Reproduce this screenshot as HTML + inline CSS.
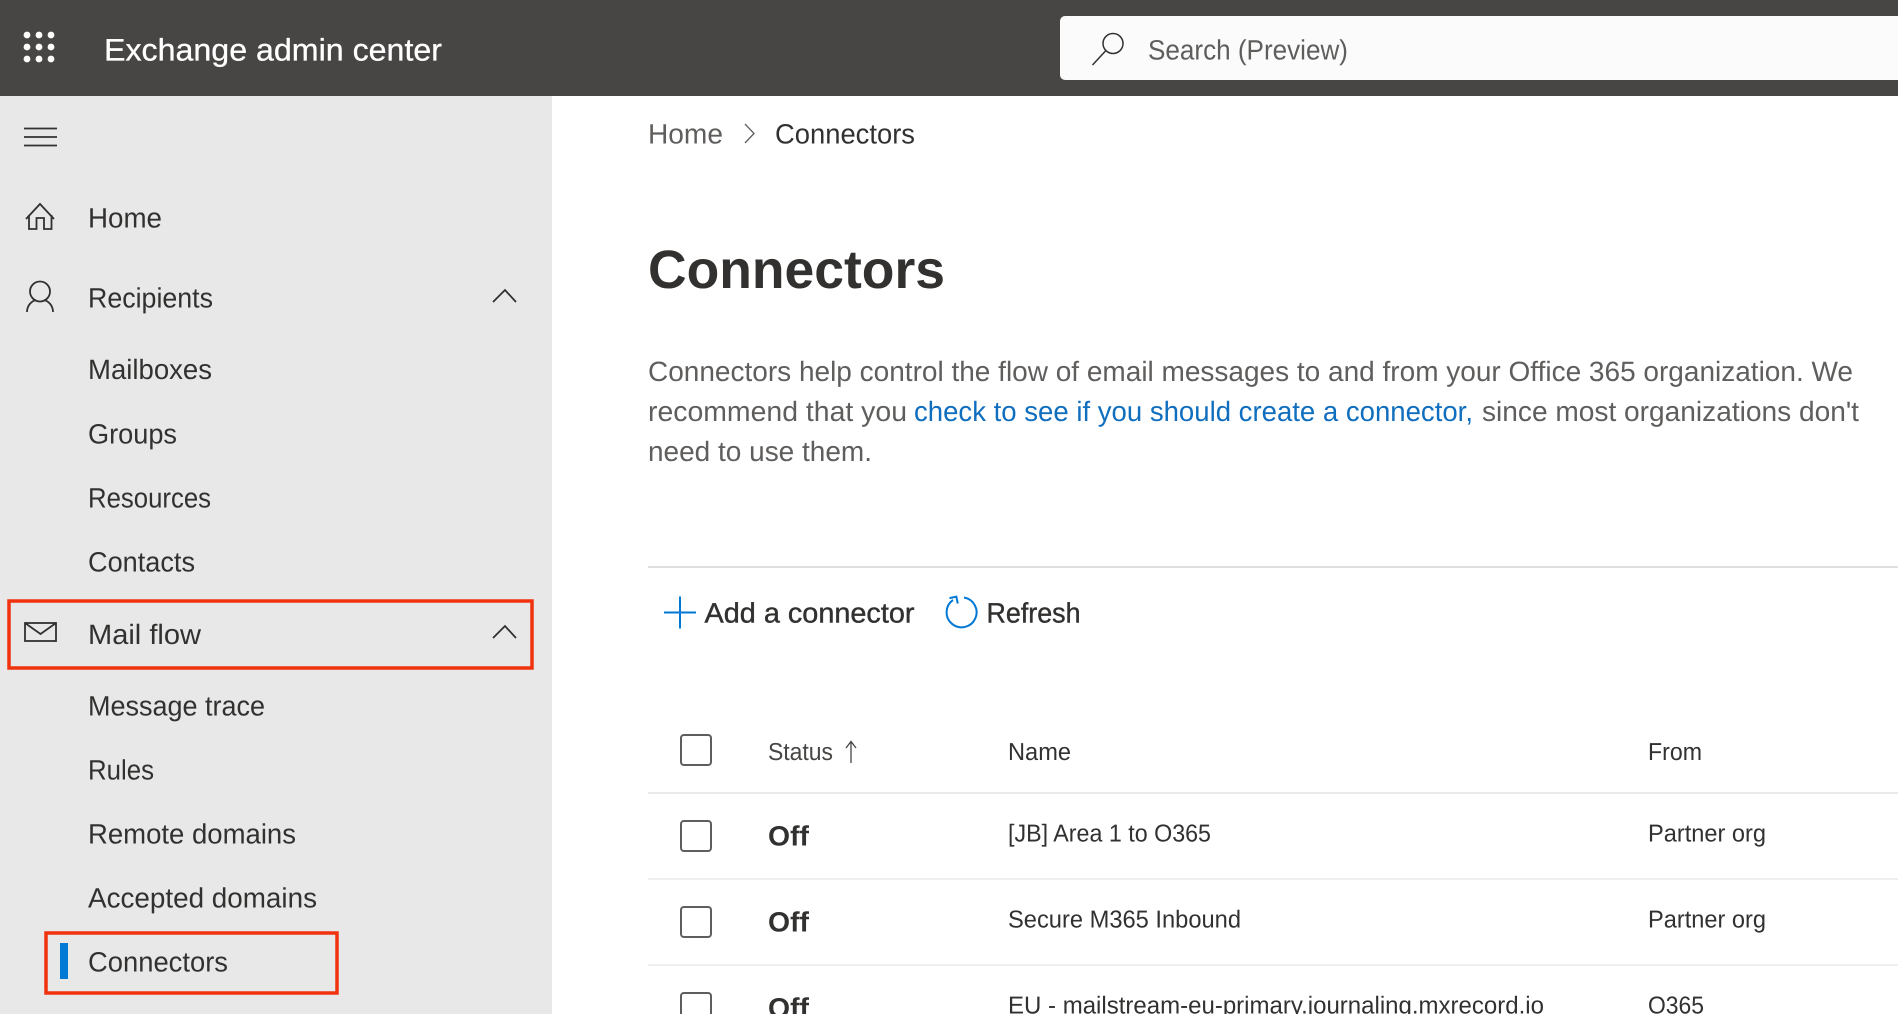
<!DOCTYPE html>
<html lang="en"><head><meta charset="utf-8"><title>Exchange admin center</title>
<style>
html,body{margin:0;padding:0;background:#fff;width:1898px;height:1014px;overflow:hidden}
svg{display:block;position:absolute;left:0;top:0}
text{font-family:"Liberation Sans",sans-serif;text-rendering:geometricPrecision;white-space:pre}
.n{font-size:28px;fill:#323130}
.p{font-size:28px;fill:#605e5c}
.t{font-size:24.500px;fill:#323130}
.s{font-size:28px;fill:#323130;stroke:#323130;stroke-width:.4px}
.o{font-size:28px;fill:#323130;font-weight:bold}
.i{fill:none;stroke:#323130;stroke-width:1.800}
</style></head><body>
<svg width="1898" height="1014" viewBox="0 0 1898 1014" xmlns="http://www.w3.org/2000/svg">
<rect width="1898" height="1014" fill="#fff"/>
<rect width="1898" height="96" fill="#484644"/>
<rect y="96" width="552" height="918" fill="#e8e8e8"/>
<g fill="#fff"><circle cx="27" cy="35" r="3.400"/><circle cx="39" cy="35" r="3.400"/><circle cx="51" cy="35" r="3.400"/><circle cx="27" cy="47" r="3.400"/><circle cx="39" cy="47" r="3.400"/><circle cx="51" cy="47" r="3.400"/><circle cx="27" cy="59" r="3.400"/><circle cx="39" cy="59" r="3.400"/><circle cx="51" cy="59" r="3.400"/></g>
<text x="104" y="60.500" font-size="31" fill="#fff" stroke="#fff" stroke-width=".3" textLength="338" lengthAdjust="spacingAndGlyphs">Exchange admin center</text>
<rect x="1060" y="16" width="860" height="64" rx="5" fill="#fbfbfb"/>
<circle cx="1113" cy="43.500" r="10" fill="none" stroke="#323130" stroke-width="1.500"/><path d="M1105.500 51 1092.500 65" fill="none" stroke="#323130" stroke-width="1.500"/>
<text x="1148" y="59.500" font-size="28" fill="#605e5c" textLength="200" lengthAdjust="spacingAndGlyphs">Search (Preview)</text>

<path d="M24 128.500H57M24 137H57M24 145.500H57" class="i"/>
<path d="M26 219 40 204 54 219M29 215V229H36.500V218H44V229H51.500V215" class="i"/>
<circle cx="40" cy="291.500" r="10" class="i"/><path d="M27 312C27 305 32 301 36 300M53 312C53 305 48 301 44 300" class="i"/>
<rect x="25" y="623" width="31" height="18" class="i"/><path d="M25 623 40.500 634 56 623" class="i"/>
<path d="M493 302 505 290 516 302M493 638 505 626 516 638" class="i"/>

<text class="n" x="88" y="227.500" textLength="74" lengthAdjust="spacingAndGlyphs">Home</text>
<text class="n" x="88" y="307.500" textLength="125" lengthAdjust="spacingAndGlyphs">Recipients</text>
<text class="n" x="88" y="379" textLength="124" lengthAdjust="spacingAndGlyphs">Mailboxes</text>
<text class="n" x="88" y="443.500" textLength="89" lengthAdjust="spacingAndGlyphs">Groups</text>
<text class="n" x="88" y="507.500" textLength="123" lengthAdjust="spacingAndGlyphs">Resources</text>
<text class="n" x="88" y="571.500" textLength="107" lengthAdjust="spacingAndGlyphs">Contacts</text>
<text class="n" x="88" y="644" textLength="113" lengthAdjust="spacingAndGlyphs">Mail flow</text>
<text class="n" x="88" y="715.500" textLength="177" lengthAdjust="spacingAndGlyphs">Message trace</text>
<text class="n" x="88" y="779.500" textLength="66" lengthAdjust="spacingAndGlyphs">Rules</text>
<text class="n" x="88" y="843.500" textLength="208" lengthAdjust="spacingAndGlyphs">Remote domains</text>
<text class="n" x="88" y="907.500" textLength="229" lengthAdjust="spacingAndGlyphs">Accepted domains</text>
<text class="n" x="88" y="971.500" textLength="140" lengthAdjust="spacingAndGlyphs">Connectors</text>
<rect x="9" y="601" width="523" height="67" fill="none" stroke="#f0320f" stroke-width="3.500"/>
<rect x="46" y="933" width="291" height="60" fill="none" stroke="#f0320f" stroke-width="3.500"/>
<rect x="60" y="943" width="8" height="36" fill="#0078d4"/>

<text x="648" y="143.500" font-size="28" fill="#605e5c" textLength="75" lengthAdjust="spacingAndGlyphs">Home</text>
<path d="M745 124 754 133.500 745 143" fill="none" stroke="#605e5c" stroke-width="1.300"/>
<text class="n" x="775" y="143.500" textLength="140" lengthAdjust="spacingAndGlyphs">Connectors</text>
<text x="648" y="288" font-size="54" font-weight="bold" fill="#323130" textLength="297" lengthAdjust="spacingAndGlyphs">Connectors</text>

<text class="p" x="648" y="381" textLength="1205" lengthAdjust="spacingAndGlyphs">Connectors help control the flow of email messages to and from your Office 365 organization. We</text>
<text class="p" x="648" y="421" textLength="259" lengthAdjust="spacingAndGlyphs">recommend that you</text>
<text x="914" y="421" font-size="28" fill="#106ebe" textLength="559" lengthAdjust="spacingAndGlyphs">check to see if you should create a connector,</text>
<text class="p" x="1482" y="421" textLength="377" lengthAdjust="spacingAndGlyphs">since most organizations don't</text>
<text class="p" x="648" y="461" textLength="224" lengthAdjust="spacingAndGlyphs">need to use them.</text>

<rect x="648" y="566" width="1250" height="2" fill="#e1dfdd"/>
<path d="M664 612.500H696M680 596.500V628.500" fill="none" stroke="#0078d4" stroke-width="2"/>
<text class="s" x="704.500" y="622.500" textLength="210" lengthAdjust="spacingAndGlyphs">Add a connector</text>
<path d="M953 600A15 15 0 1 0 964 597.500" fill="none" stroke="#0078d4" stroke-width="2"/>
<path d="M950 597H957V604" fill="none" stroke="#0078d4" stroke-width="2" transform="rotate(-12 955 600)"/>
<text class="s" x="986.500" y="622.500" textLength="94" lengthAdjust="spacingAndGlyphs">Refresh</text>

<g fill="none" stroke="#605e5c" stroke-width="2">
<rect x="681" y="735" width="30" height="30" rx="3"/>
<rect x="681" y="821" width="30" height="30" rx="3"/>
<rect x="681" y="907" width="30" height="30" rx="3"/>
<rect x="681" y="993" width="30" height="30" rx="3"/>
</g>
<text class="t" x="768" y="760" style="fill:#484644" textLength="65" lengthAdjust="spacingAndGlyphs">Status</text>
<path d="M851 763V742M846 748 851 741.500 856 748" fill="none" stroke="#484644" stroke-width="1.300"/>
<text class="t" x="1008" y="760" textLength="63" lengthAdjust="spacingAndGlyphs">Name</text>
<text class="t" x="1648" y="760" textLength="54" lengthAdjust="spacingAndGlyphs">From</text>

<rect x="648" y="792" width="1250" height="2" fill="#edebe9"/>
<rect x="648" y="878" width="1250" height="2" fill="#f0efee"/>
<rect x="648" y="964" width="1250" height="2" fill="#f0efee"/>

<text class="o" x="768" y="845.500" textLength="41" lengthAdjust="spacingAndGlyphs">Off</text>
<text class="o" x="768" y="931.500" textLength="41" lengthAdjust="spacingAndGlyphs">Off</text>
<text class="o" x="768" y="1017.500" textLength="41" lengthAdjust="spacingAndGlyphs">Off</text>

<text class="t" x="1008" y="841.500" textLength="203" lengthAdjust="spacingAndGlyphs">[JB] Area 1 to O365</text>
<text class="t" x="1008" y="927.500" textLength="233" lengthAdjust="spacingAndGlyphs">Secure M365 Inbound</text>
<text class="t" x="1008" y="1013.500" textLength="536" lengthAdjust="spacingAndGlyphs">EU - mailstream-eu-primary.journaling.mxrecord.io</text>
<text class="t" x="1648" y="841.500" textLength="118" lengthAdjust="spacingAndGlyphs">Partner org</text>
<text class="t" x="1648" y="927.500" textLength="118" lengthAdjust="spacingAndGlyphs">Partner org</text>
<text class="t" x="1648" y="1013.500" textLength="56" lengthAdjust="spacingAndGlyphs">O365</text>
</svg>
</body></html>
